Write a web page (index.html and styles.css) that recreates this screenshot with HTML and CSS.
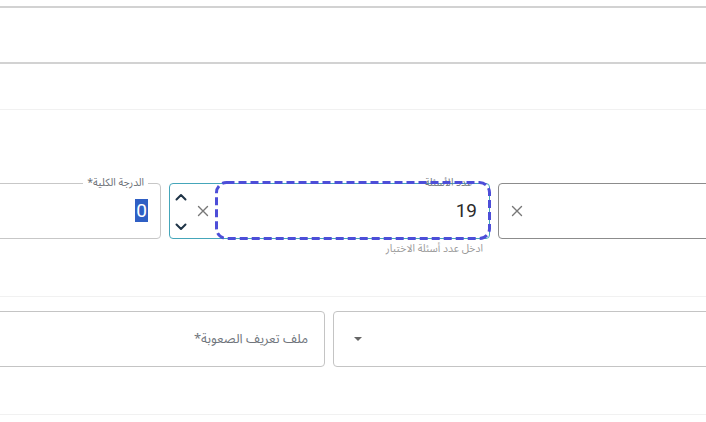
FILE: index.html
```html
<!DOCTYPE html>
<html lang="ar">
<head>
<meta charset="utf-8">
<title>نموذج الاختبار</title>
<link rel="stylesheet" href="styles.css">
</head>
<body>
<div class="page">
  <div class="rule rule-strong first"></div>
  <div class="rule rule-strong second"></div>
  <div class="rule rule-faint third"></div>

  <section class="section-one">
    <div class="row">
      <div class="field field-total">
        <span class="float-label">الدرجة الكلية*</span>
        <div class="value"><span class="selected">0</span></div>
      </div>

      <div class="field-col">
        <div class="field field-count">
          <div class="spinner">
            <svg class="chev" width="12" height="8" viewBox="0 0 12 8"><path d="M1.5 6.5 L6 2 L10.5 6.5" fill="none" stroke="#1f3447" stroke-width="2" stroke-linecap="round" stroke-linejoin="round"/></svg>
            <svg class="chev" width="12" height="8" viewBox="0 0 12 8"><path d="M1.5 1.5 L6 6 L10.5 1.5" fill="none" stroke="#1f3447" stroke-width="2" stroke-linecap="round" stroke-linejoin="round"/></svg>
          </div>
          <svg class="clear" width="12" height="12" viewBox="0 0 12 12"><path d="M1.5 1.5 L10.5 10.5 M10.5 1.5 L1.5 10.5" stroke="#777" stroke-width="1.4" stroke-linecap="round"/></svg>
          <div class="input-area">
            <span class="float-label count-label">عدد الأسئلة</span>
            <span class="num">19</span>
            <svg class="focus-ring" aria-hidden="true"><rect class="ring-rect"/></svg>
          </div>
        </div>
        <div class="helper">ادخل عدد أسئلة الاختبار</div>
      </div>

      <div class="field field-third">
        <svg class="clear" width="12" height="12" viewBox="0 0 12 12"><path d="M1.5 1.5 L10.5 10.5 M10.5 1.5 L1.5 10.5" stroke="#777" stroke-width="1.4" stroke-linecap="round"/></svg>
      </div>
    </div>
  </section>

  <div class="rule rule-faint fourth"></div>

  <section class="row row-two">
    <div class="field field-profile">
      <span class="placeholder">ملف تعريف الصعوبة*</span>
    </div>
    <div class="field field-select">
      <span class="caret"></span>
    </div>
  </section>

  <div class="rule rule-faint fifth"></div>
</div>
</body>
</html>
```

FILE: styles.css
```css
html, body {
  margin: 0;
  padding: 0;
  background: #ffffff;
  overflow: hidden;
}

body {
  width: 706px;
  height: 422px;
  font-family: "Noto Sans Arabic", "DejaVu Sans", "Noto Sans", sans-serif;
}

.page {
  width: 706px;
}

.rule {
  height: 0;
}

.rule-strong {
  border-top: 2px solid #d2d2d2;
}

.rule-faint {
  border-top: 1px solid #f1f1f1;
}

.first { margin-top: 6px; }
.second { margin-top: 54px; }
.third { margin-top: 45px; }

.section-one {
  height: 113px;
  margin-top: 73px;
}

.row {
  display: flex;
  direction: ltr;
  gap: 8px;
  align-items: flex-start;
}

.field {
  box-sizing: border-box;
  height: 56px;
  border-radius: 4px;
  position: relative;
  display: flex;
  align-items: center;
  background: #fff;
}

.field-total {
  flex: 0 0 212px;
  margin-left: -51px;
  border: 1px solid #c7c7c7;
  justify-content: flex-end;
  padding-right: 12px;
}

.float-label {
  position: absolute;
  top: -8px;
  font-size: 10.5px;
  line-height: 14px;
  color: #6b6f76;
  background: #fff;
  padding: 0 4px;
  direction: rtl;
  white-space: nowrap;
}

.field-total .float-label {
  right: 12px;
}

.value {
  font-family: Roboto, "Liberation Sans", sans-serif;
  font-size: 19px;
  line-height: 22px;
}

.selected {
  background: #2f5fc4;
  color: #fff;
  padding: 0 1px;
}

.field-col {
  flex: 0 0 321px;
  display: flex;
  flex-direction: column;
}

.field-count {
  border: 1px solid #45a6ba;
}

.spinner {
  width: 22px;
  height: 100%;
  display: flex;
  flex-direction: column;
  justify-content: space-between;
  align-items: center;
  padding: 9px 0 7px 0;
  box-sizing: border-box;
}

.chev {
  display: block;
}

.clear {
  display: block;
  flex: 0 0 12px;
}

.field-count .clear {
  margin-left: 5px;
}

.input-area {
  position: relative;
  flex: 1 1 auto;
  align-self: stretch;
  margin-left: 6px;
  margin-right: -1px;
  display: flex;
  align-items: center;
  justify-content: flex-end;
  padding-right: 13px;
}

.count-label {
  right: 14px;
  top: -8px;
  color: #6f7780;
  background: transparent;
}

.num {
  font-family: Roboto, "Liberation Sans", sans-serif;
  font-size: 19px;
  color: #2b2b2b;
  line-height: 22px;
}

.focus-ring {
  position: absolute;
  left: 0;
  top: -3px;
  width: calc(100% + 1px);
  height: calc(100% + 5px);
  overflow: visible;
  pointer-events: none;
}

.ring-rect {
  x: 1.5px;
  y: 1.5px;
  width: calc(100% - 3px);
  height: calc(100% - 3px);
  rx: 10px;
  ry: 10px;
  fill: none;
  stroke: #4d4ed8;
  stroke-width: 3px;
  stroke-dasharray: 8px 4px;
}

.helper {
  direction: rtl;
  font-size: 10.5px;
  line-height: 14px;
  color: #9a9a9a;
  padding-right: 7px;
  margin-top: 3px;
}

.field-third {
  flex: 0 0 260px;
  border: 1px solid #8c8c8c;
  padding-left: 12px;
}

.row-two {
  margin-top: 14px;
}

.field-profile {
  flex: 0 0 376px;
  margin-left: -51px;
  border: 1px solid #c4c4c4;
  justify-content: flex-end;
  padding-right: 16px;
}

.placeholder {
  direction: rtl;
  font-size: 13px;
  color: #70757c;
}

.field-select {
  flex: 0 0 400px;
  border: 1px solid #c4c4c4;
  padding-left: 20px;
}

.caret {
  width: 0;
  height: 0;
  border-left: 4px solid transparent;
  border-right: 4px solid transparent;
  border-top: 4px solid #666;
}

.fifth {
  margin-top: 47px;
}
```
